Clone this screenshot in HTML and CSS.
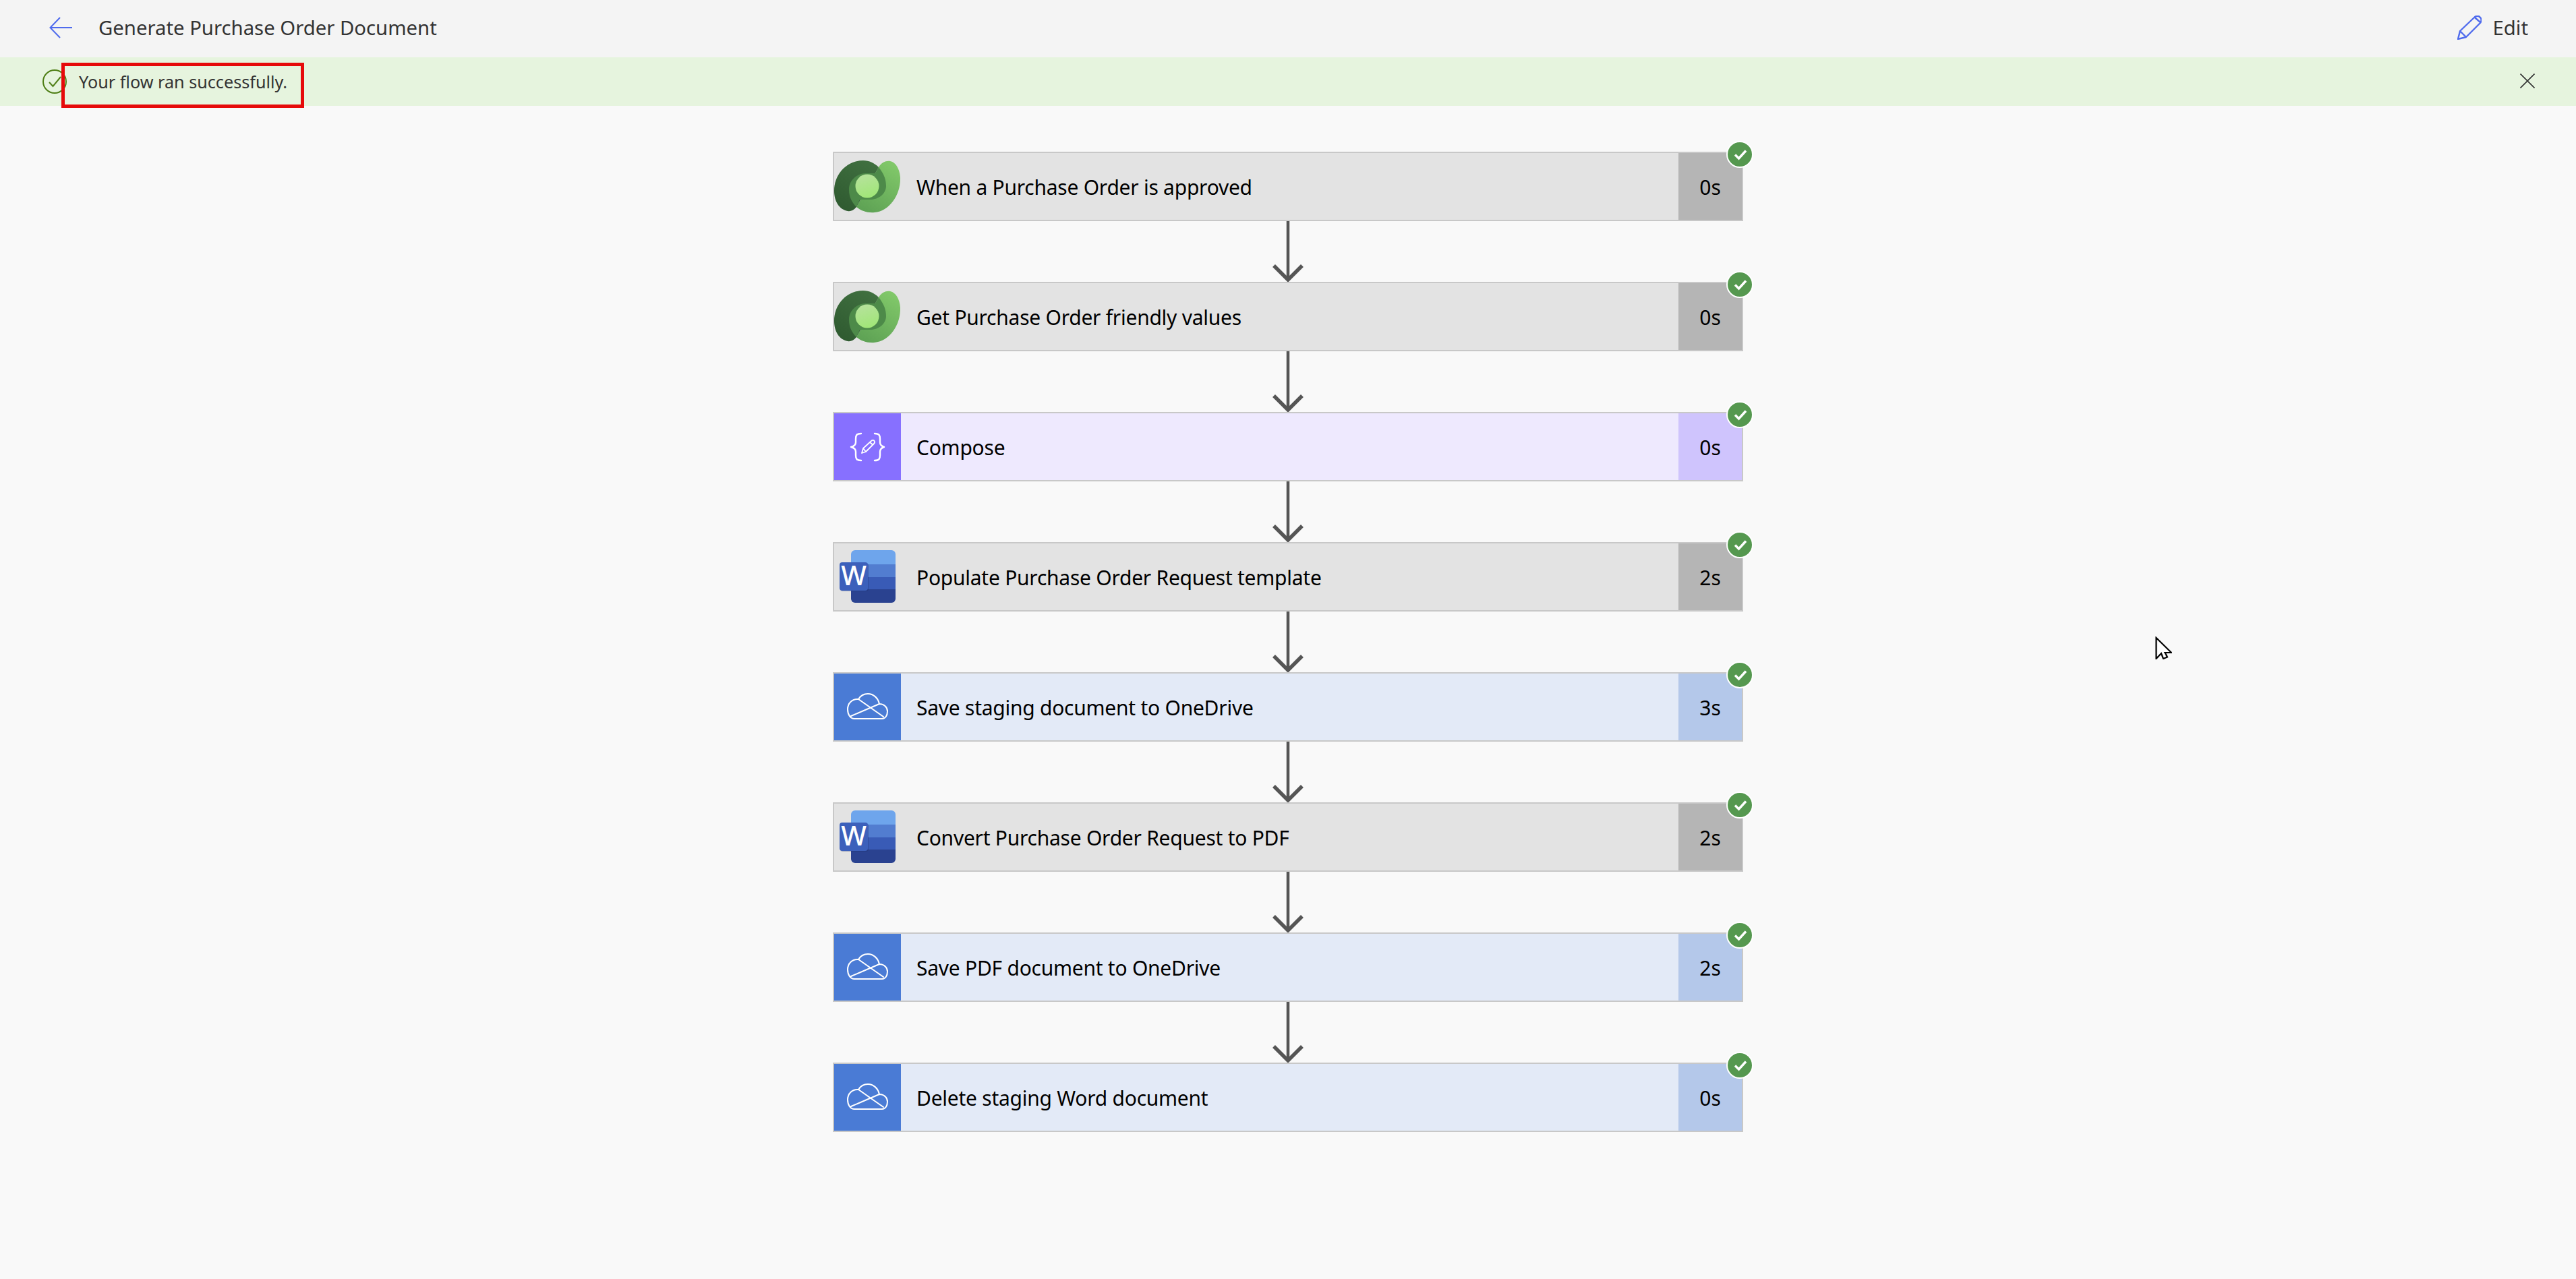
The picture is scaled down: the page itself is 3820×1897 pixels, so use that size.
FILE: index.html
```html
<!DOCTYPE html>
<html lang="en">
<head>
<meta charset="utf-8">
<title>Generate Purchase Order Document</title>
<link rel="stylesheet" href="styles.css">
</head>
<body>
<svg class="defs" width="0" height="0">
  <defs>
    <linearGradient id="dvDark" x1="0.7" y1="0" x2="0.2" y2="1"><stop offset="0" stop-color="#3f6f3f"/><stop offset="1" stop-color="#2f5a30"/></linearGradient>
    <linearGradient id="dvLight" x1="0.8" y1="0" x2="0.3" y2="1"><stop offset="0" stop-color="#82c96a"/><stop offset="1" stop-color="#5fa355"/></linearGradient>
    <linearGradient id="dvDot" x1="0.3" y1="0" x2="0.6" y2="1"><stop offset="0" stop-color="#b6e29c"/><stop offset="1" stop-color="#a0e677"/></linearGradient>
    <symbol id="i-dataverse" viewBox="0 0 99 99">
      <path fill="url(#dvLight)" d="M66 21C70 14 77 11 83 12C92 14 97 24 98 36C99 62 82 86 60 88C50 89 40 86 33 80Z"/>
      <path fill="url(#dvDark)" d="M43 11C52 11 60 15 66 21L33 80C29 85 24 87 20 86C8 84 0 72 0 56C0 30 20 11 43 11Z"/>
      <path fill="#4d8a49" d="M66 21C73 30 77 38 77 49C77 60 66 69 54 69L38 69L33 80C27 74 22 66 22 54C22 40 34 30 47 30L61 30Z"/>
      <circle cx="49" cy="49" r="17.500" fill="url(#dvDot)"/>
    </symbol>
    <symbol id="i-word" viewBox="0 0 99 99">
      <path fill="#6ea5ec" d="M25 16a6 6 0 0 1 6-6h54a6 6 0 0 1 6 6v16H25Z"/>
      <rect x="25" y="31" width="66" height="19" fill="#527dd0"/>
      <rect x="25" y="50" width="66" height="19" fill="#395bb6"/>
      <path fill="#2a4290" d="M25 68h66v14a6 6 0 0 1-6 6H31a6 6 0 0 1-6-6Z"/>
      <rect x="9" y="29" width="42" height="42" rx="4" fill="#1c2f66" opacity="0.35"/>
      <rect x="8" y="28" width="42" height="42" rx="4" fill="#3c60bb"/>
      <text class="word-w" x="29" y="62" text-anchor="middle">W</text>
    </symbol>
    <symbol id="i-cloud" viewBox="0 0 99 99">
      <path fill="none" stroke="#fff" stroke-width="2" stroke-linejoin="round" stroke-linecap="round" d="M30 67H71C76 67 79 62 79 56C79 50 74 45 67 45C65 36 58 30 50 30C44 30 39 33 36 38C27 37 20 44 20 53C20 61 24 67 30 67ZM36 38L73 64M25 63L67 45"/>
    </symbol>
    <symbol id="i-compose" viewBox="0 0 99 99">
      <g fill="none" stroke="#fff" stroke-width="2.400" stroke-linecap="round" stroke-linejoin="round">
        <path d="M40 30C33 30 32 33 32 38V43C32 47 29 49 25 50C29 51 32 53 32 57V62C32 67 33 70 40 70"/>
        <path d="M60 30C67 30 68 33 68 38V43C68 47 71 49 74 50C71 51 68 53 68 57V62C68 67 67 70 60 70"/>
        <path stroke-width="1.800" d="M41 59L43 52L55 41C57 39 59 40 59.500 41C60.500 42.500 60 44 59 45L47 57ZM43 52L47 57M53 43L57.500 47"/>
      </g>
    </symbol>
    <symbol id="i-check" viewBox="0 0 36 36">
      <path d="M11 18.500L16.500 24L27 12.500" fill="none" stroke="#fff" stroke-width="3.500"/>
    </symbol>
    <symbol id="i-arrow" viewBox="0 0 48 90">
      <path d="M24 0V86" fill="none" stroke="#555" stroke-width="4.500"/>
      <path d="M3 66L24 87L45 66" fill="none" stroke="#555" stroke-width="5.500"/>
    </symbol>
  </defs>
</svg>

<header class="topbar">
  <div class="topbar-left">
    <svg class="back-icon" viewBox="0 0 35 32"><path d="M34 16H2M16 1L1.500 16L16 31" fill="none" stroke="#4f6bed" stroke-width="2"/></svg>
    <h1 class="title">Generate Purchase Order Document</h1>
  </div>
  <div class="edit">
    <svg class="edit-icon" viewBox="0 0 36 36"><path d="M1 35L4 23L25 3C28 0 32 0 34 3C36 5 36 8 34 11L13 32ZM4 23L13 32M26 3L34 10" fill="none" stroke="#4f6bed" stroke-width="2.400" stroke-linejoin="round"/></svg>
    <span class="edit-label">Edit</span>
  </div>
</header>

<div class="banner">
  <svg class="ok-icon" viewBox="0 0 36 36"><circle cx="18" cy="18" r="17" fill="none" stroke="#4f7f16" stroke-width="2"/><path d="M10 19L15.500 25L27 11" fill="none" stroke="#4f7f16" stroke-width="2"/></svg>
  <span class="banner-text">Your flow ran successfully.</span>
  <svg class="close-icon" viewBox="0 0 22 22"><path d="M0.500 0.500L21.500 21.500M21.500 0.500L0.500 21.500" stroke="#333" stroke-width="1.600"/></svg>
  <div class="highlight"></div>
</div>

<main class="flow">
  <div class="step grey"><div class="step-icon"><svg class="glyph"><use href="#i-dataverse"/></svg></div><div class="step-name">When a Purchase Order is approved</div><div class="step-time">0s</div><span class="badge"><svg><use href="#i-check"/></svg></span></div>
  <div class="link"><svg><use href="#i-arrow"/></svg></div>
  <div class="step grey"><div class="step-icon"><svg class="glyph"><use href="#i-dataverse"/></svg></div><div class="step-name">Get Purchase Order friendly values</div><div class="step-time">0s</div><span class="badge"><svg><use href="#i-check"/></svg></span></div>
  <div class="link"><svg><use href="#i-arrow"/></svg></div>
  <div class="step purple"><div class="step-icon"><svg class="glyph"><use href="#i-compose"/></svg></div><div class="step-name">Compose</div><div class="step-time">0s</div><span class="badge"><svg><use href="#i-check"/></svg></span></div>
  <div class="link"><svg><use href="#i-arrow"/></svg></div>
  <div class="step grey"><div class="step-icon"><svg class="glyph"><use href="#i-word"/></svg></div><div class="step-name">Populate Purchase Order Request template</div><div class="step-time">2s</div><span class="badge"><svg><use href="#i-check"/></svg></span></div>
  <div class="link"><svg><use href="#i-arrow"/></svg></div>
  <div class="step blue"><div class="step-icon"><svg class="glyph"><use href="#i-cloud"/></svg></div><div class="step-name">Save staging document to OneDrive</div><div class="step-time">3s</div><span class="badge"><svg><use href="#i-check"/></svg></span></div>
  <div class="link"><svg><use href="#i-arrow"/></svg></div>
  <div class="step grey"><div class="step-icon"><svg class="glyph"><use href="#i-word"/></svg></div><div class="step-name">Convert Purchase Order Request to PDF</div><div class="step-time">2s</div><span class="badge"><svg><use href="#i-check"/></svg></span></div>
  <div class="link"><svg><use href="#i-arrow"/></svg></div>
  <div class="step blue"><div class="step-icon"><svg class="glyph"><use href="#i-cloud"/></svg></div><div class="step-name">Save PDF document to OneDrive</div><div class="step-time">2s</div><span class="badge"><svg><use href="#i-check"/></svg></span></div>
  <div class="link"><svg><use href="#i-arrow"/></svg></div>
  <div class="step blue"><div class="step-icon"><svg class="glyph"><use href="#i-cloud"/></svg></div><div class="step-name">Delete staging Word document</div><div class="step-time">0s</div><span class="badge"><svg><use href="#i-check"/></svg></span></div>
</main>

<svg class="cursor" viewBox="0 0 25 34"><path d="M1.500 2V33L9 25L12 33L18 30.500L14.500 24H24Z" fill="#fff" stroke="#000" stroke-width="2.200" stroke-linejoin="miter"/></svg>
</body>
</html>
```
FILE: styles.css
```css
* { box-sizing: border-box; }
html, body { margin: 0; height: 100%; }
body {
  position: relative;
  display: flex;
  flex-direction: column;
  min-height: 100vh;
  overflow: hidden;
  background: #f9f9f9;
  font-family: "Noto Sans", "Open Sans", sans-serif;
  color: #000;
}
.defs { position: absolute; }
.word-w { font-family: "Noto Sans", sans-serif; font-size: 40px; font-weight: 500; fill: #fff; }

.topbar {
  height: 85px;
  flex: none;
  display: flex;
  align-items: center;
  justify-content: space-between;
  background: #f4f4f4;
  padding: 0 71px 4px 73px;
}
.topbar-left { display: flex; align-items: center; gap: 38px; }
.back-icon { width: 35px; height: 32px; display: block; }
.title {
  margin: 0;
  font-size: 29.300px;
  font-weight: 400;
  color: #333;
  line-height: 40px;
  white-space: nowrap;
}
.edit { display: flex; align-items: center; gap: 17px; }
.edit-icon { width: 36px; height: 36px; display: block; }
.edit-label { font-size: 29.300px; line-height: 40px; color: #333; }

.banner {
  position: relative;
  height: 72px;
  flex: none;
  display: flex;
  align-items: center;
  background: #e6f4de;
  padding: 0 61px 0 63px;
}
.ok-icon { width: 36px; height: 36px; flex: none; }
.banner-text { margin-left: 18px; font-size: 25.200px; line-height: 36px; color: #333; }
.close-icon { width: 22px; height: 22px; margin-left: auto; margin-top: -2px; }
.highlight {
  position: absolute;
  left: 91px;
  top: 8px;
  width: 360px;
  height: 67px;
  border: 5px solid #e60a0a;
}

.flow {
  flex: 1;
  display: flex;
  flex-direction: column;
  align-items: center;
  padding-top: 68px;
}
.step {
  position: relative;
  width: 1350px;
  height: 103px;
  flex: none;
  display: flex;
  border: 2px solid #c8c8c8;
}
.step-icon { width: 99px; flex: none; }
.glyph { display: block; width: 99px; height: 99px; }
.step-name {
  flex: 1;
  display: flex;
  align-items: center;
  padding: 1px 0 0 23px;
  font-size: 30px;
  letter-spacing: -0.250px;
  white-space: nowrap;
}
.step-time {
  width: 94px;
  flex: none;
  display: flex;
  align-items: center;
  justify-content: center;
  padding-top: 1px;
  font-size: 30px;
}
.grey .step-name { background: #e3e3e3; }
.grey .step-icon { background: #e3e3e3; }
.grey .step-time { background: #b5b5b5; }
.purple .step-icon { background: #8770ff; }
.purple .step-name { background: #eee9fe; }
.purple .step-time { background: #cfc4fd; }
.blue .step-icon { background: #4a7bd5; }
.blue .step-name { background: #e3eaf7; }
.blue .step-time { background: #b4c8ea; }

.badge {
  position: absolute;
  right: -17px;
  top: -18px;
  width: 40px;
  height: 40px;
  border-radius: 50%;
  border: 2px solid #fff;
  background: #55984f;
}
.badge svg { display: block; width: 36px; height: 36px; }

.link { width: 48px; height: 90px; flex: none; }
.link svg { display: block; width: 48px; height: 90px; }

.cursor {
  position: absolute;
  left: 3196px;
  top: 944px;
  width: 25px;
  height: 34px;
}
```
